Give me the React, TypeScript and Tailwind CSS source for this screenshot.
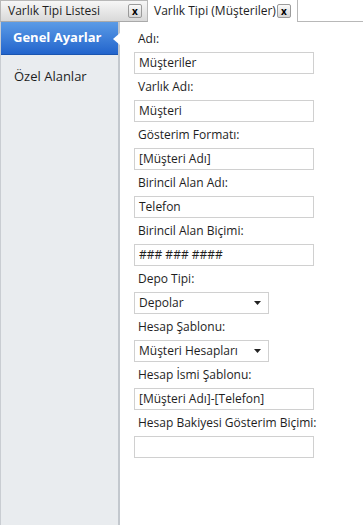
import { useState } from 'react'

const FONT = "font-['Segoe_UI','Open_Sans',sans-serif]"

const FIELDS: { label: string; value: string; kind: 'text' | 'select' }[] = [
  { label: 'Adı:', value: 'Müşteriler', kind: 'text' },
  { label: 'Varlık Adı:', value: 'Müşteri', kind: 'text' },
  { label: 'Gösterim Formatı:', value: '[Müşteri Adı]', kind: 'text' },
  { label: 'Birincil Alan Adı:', value: 'Telefon', kind: 'text' },
  { label: 'Birincil Alan Biçimi:', value: '### ### ####', kind: 'text' },
  { label: 'Depo Tipi:', value: 'Depolar', kind: 'select' },
  { label: 'Hesap Şablonu:', value: 'Müşteri Hesapları', kind: 'select' },
  { label: 'Hesap İsmi Şablonu:', value: '[Müşteri Adı]-[Telefon]', kind: 'text' },
  { label: 'Hesap Bakiyesi Gösterim Biçimi:', value: '', kind: 'text' },
]

function CloseBox() {
  return (
    <span className="flex h-[14px] w-[14px] items-center justify-center rounded-[2px] border border-[#9a9a9a] bg-gradient-to-b from-[#fafafa] to-[#d6d6d6] text-[10px] font-bold leading-none text-black">
      x
    </span>
  )
}

function Field({ label, value, kind }: { label: string; value: string; kind: 'text' | 'select' }) {
  return (
    <div className="flex flex-col">
      <div className="h-[26px] pl-[4px] pt-[5px] text-[12px] leading-[16px] text-[#1e1e1e]">{label}</div>
      {kind === 'text' ? (
        <div className="flex h-[22px] w-[180px] items-center border border-[#d0d0d0] bg-white px-[4px] text-[12px] text-[#1e1e1e]">
          {value}
        </div>
      ) : (
        <div className="flex h-[22px] w-[135px] items-center justify-between border border-[#d0d0d0] bg-white pl-[4px] pr-[7px] text-[12px] text-[#1e1e1e]">
          <span>{value}</span>
          <svg width="7" height="4" viewBox="0 0 7 4">
            <path d="M0 0h7L3.5 4z" fill="#222" />
          </svg>
        </div>
      )}
    </div>
  )
}

export default function App() {
  const [tab] = useState('genel')

  return (
    <div className={`${FONT} flex h-[525px] w-[363px] flex-col overflow-hidden bg-white`}>
      {/* tab strip */}
      <div className="flex h-[22px] shrink-0 items-stretch">
        <div className="flex w-[148px] items-center justify-between border border-b-[#a9a9a9] border-[#b8b8b8] bg-gradient-to-b from-[#f7f7f7] to-[#d9d9d9] pl-[7px] pr-[5px] text-[12px] text-[#1e1e1e]">
          <span>Varlık Tipi Listesi</span>
          <CloseBox />
        </div>
        <div className="flex w-[150px] items-center justify-between border-r border-[#b8b8b8] bg-white pl-[6px] pr-[6px] text-[12px] text-[#1e1e1e]">
          <span>Varlık Tipi (Müşteriler)</span>
          <CloseBox />
        </div>
        <div className="flex-1 border-b border-[#b8b8b8]" />
      </div>

      <div className="flex flex-1">
        {/* sidebar */}
        <div className="flex w-[120px] shrink-0 flex-col border-l border-r-2 border-l-[#c9cdd2] border-r-[#c3c8ce] bg-[#e9ecef]">
          <div className="relative flex h-[33px] items-center border-b border-[#1a55b0] bg-gradient-to-b from-[#5b9be6] to-[#2264cc] pl-[12px] text-[13px] font-bold text-white">
            {tab === 'genel' && 'Genel Ayarlar'}
            <span className="absolute right-[-2px] top-[11px] h-0 w-0 border-y-[6px] border-r-[7px] border-y-transparent border-r-white" />
          </div>
          <div className="pl-[13px] pt-[12px] text-[13px] text-[#1e1e1e]">Özel Alanlar</div>
        </div>

        {/* form */}
        <div className="flex flex-1 flex-col pl-[14px] pt-[4px]">
          {FIELDS.map(f => (
            <Field key={f.label} {...f} />
          ))}
        </div>
      </div>
    </div>
  )
}
